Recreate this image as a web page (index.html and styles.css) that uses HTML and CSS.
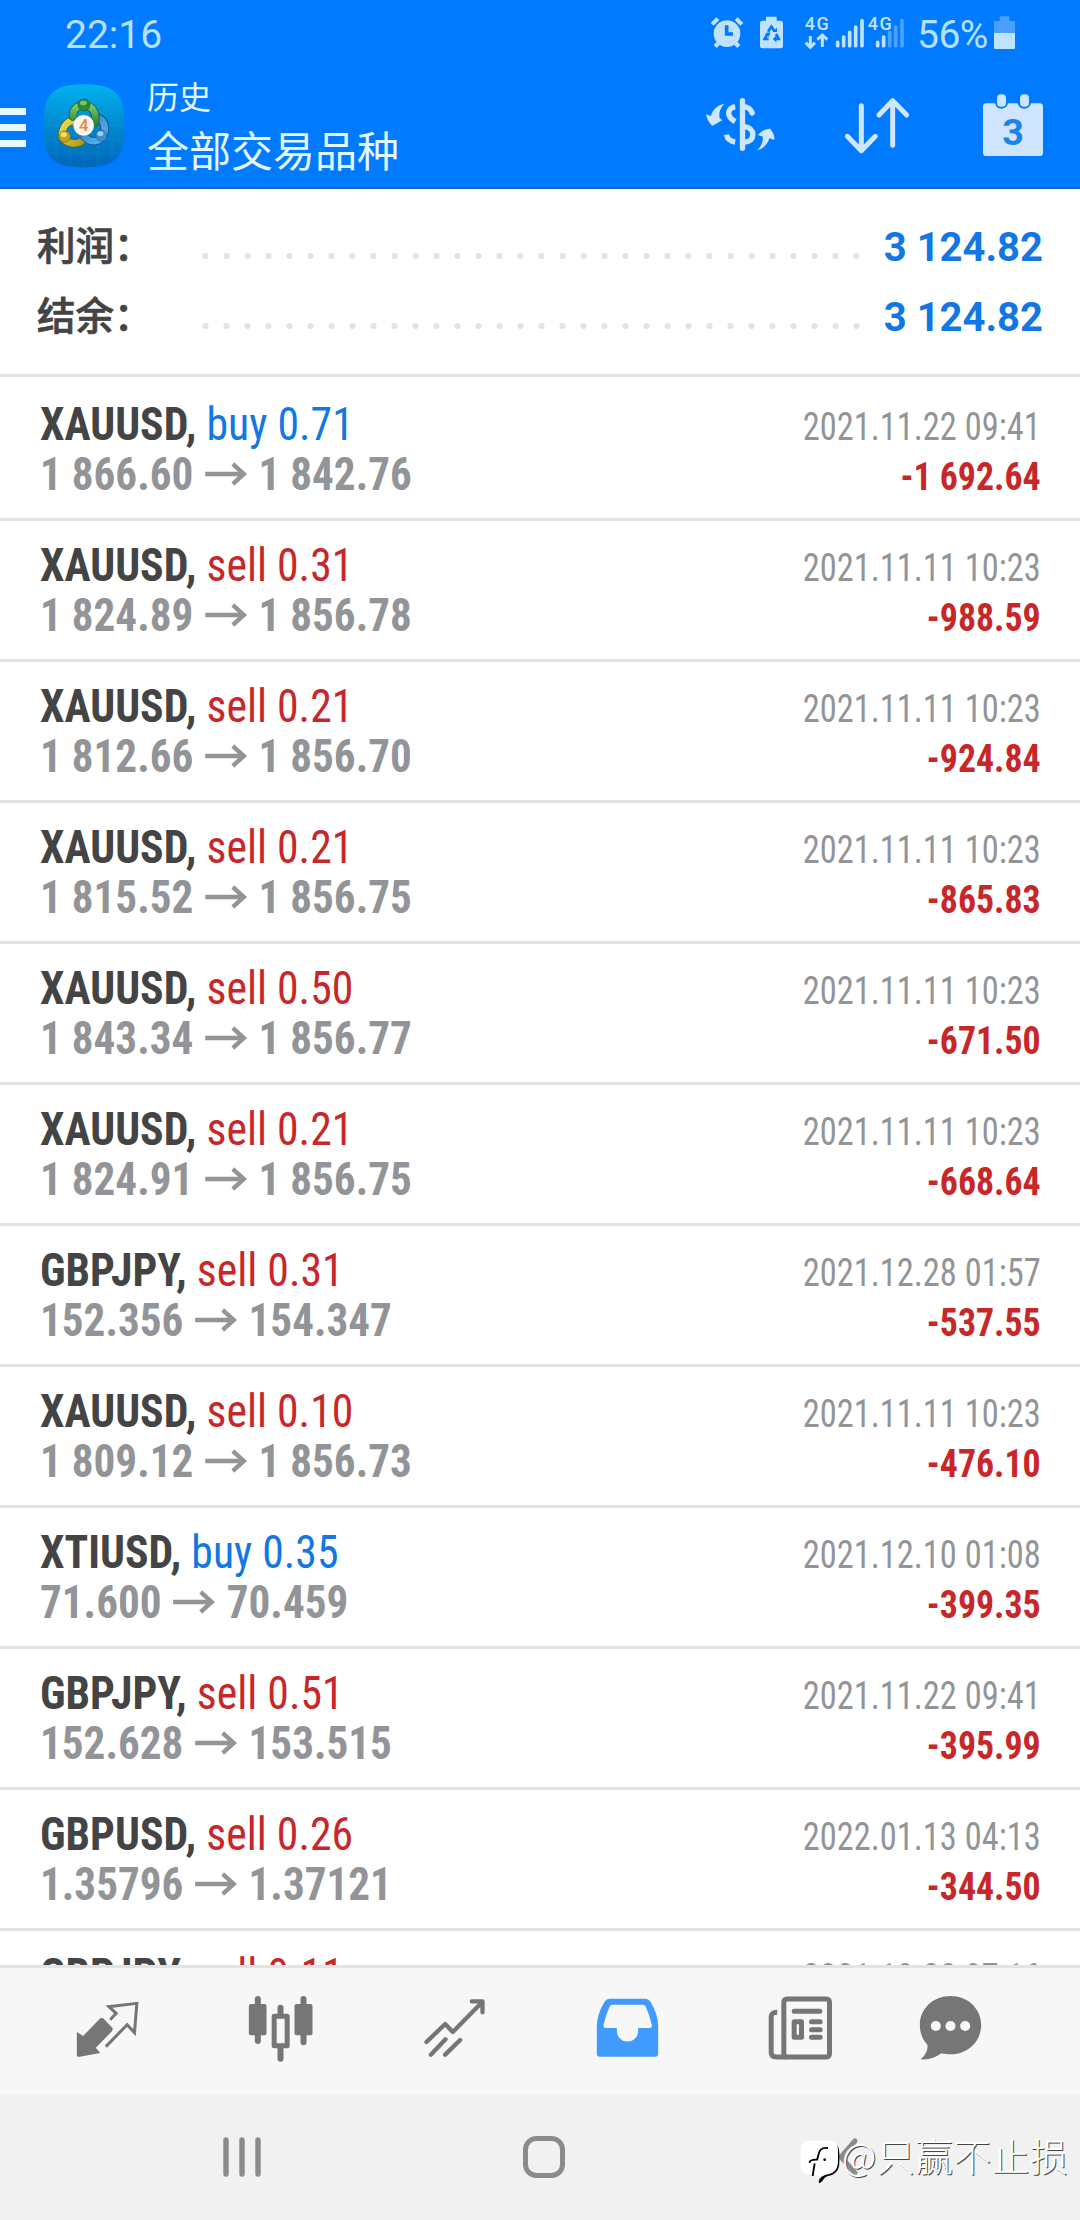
FILE: index.html
```html
<!DOCTYPE html>
<html lang="zh-CN">
<head>
<meta charset="utf-8">
<title>历史</title>
<link rel="stylesheet" href="styles.css">
</head>
<body>
<header class="top">
  <div class="status">
    <span class="clock">22:16</span>
    <svg class="s-alarm" viewBox="30 48 102 99">
      <g fill="#bfe2ff"><circle cx="81" cy="101" r="40"/>
      <path d="M32 69l17-17 9 8-17 17zM130 69l-17-17-9 8 17 17zM50 125l10 9-10 10-9-9zM112 125l-10 9 10 10 9-9z"/></g>
      <path d="M80 76v26h19" fill="none" stroke="#007aff" stroke-width="11"/>
    </svg>
    <svg class="s-saver" viewBox="180 48 69 99">
      <path fill="#bfe2ff" d="M198 50h32v12h12q7 0 7 7v69q0 7-7 7h-55q-7 0-7-7V69q0-7 7-7h11z"/>
      <g fill="none" stroke="#007aff" stroke-width="8"><path d="M204 95l10-15 10 14M206 117h-12l8-15M222 117h14l-8-15"/></g>
      <path fill="#007aff" d="M218 96h13V83zM196 99l15-2-4 13zM218 117l11-10v20z"/>
    </svg>
    <svg class="s-net1" viewBox="312 48 183 99">
      <text x="314" y="91" class="g4" textLength="72">4G</text>
      <g fill="none" stroke="#bfe2ff" stroke-width="9"><path d="M331 108v32M317 128l14 14 14-14M367 141v-32M352 119l15-14 15 14"/></g>
      <path d="M413 127v10M431 111v26M449 97v40M467 81v56M486 62v75" stroke="#bfe2ff" stroke-width="11" stroke-linecap="round"/>
    </svg>
    <svg class="s-net2" viewBox="501 48 114 99">
      <path d="M569 97v40M587 81v56M606 62v75" stroke="#4aa4ff" stroke-width="11" stroke-linecap="round"/>
      <path d="M533 127v10M551 111v26" stroke="#bfe2ff" stroke-width="11" stroke-linecap="round"/>
      <text x="503" y="91" class="g4" textLength="72">4G</text>
    </svg>
    <span class="pct">56%</span>
    <svg class="s-batt" viewBox="882 48 63 99">
      <path fill="#4aa0ff" d="M899 49h29v14h17v36h-63V63h17z"/>
      <path fill="#bfe2ff" d="M882 99h63v44q0 4-4 4h-55q-4 0-4-4z"/>
    </svg>
  </div>
  <div class="bar">
    <div class="burger"><i></i><i></i><i></i></div>
    <svg class="logo" viewBox="126 42 252 252">
      <defs>
        <linearGradient id="bg" x1="0" y1="0" x2="0" y2="1"><stop offset="0" stop-color="#00b2ee"/><stop offset=".5" stop-color="#0089d0"/><stop offset="1" stop-color="#0066b8"/></linearGradient>
        <linearGradient id="gr" x1="0" y1="0" x2="0" y2="1"><stop offset="0" stop-color="#7fca6a"/><stop offset="1" stop-color="#2a8a3a"/></linearGradient>
        <linearGradient id="ye" x1="0" y1="0" x2="1" y2="1"><stop offset="0" stop-color="#e9e05a"/><stop offset="1" stop-color="#b79a1c"/></linearGradient>
        <linearGradient id="bl" x1="0" y1="0" x2="1" y2="1"><stop offset="0" stop-color="#2b7fc4"/><stop offset="1" stop-color="#5bb4ee"/></linearGradient>
      </defs>
      <path fill="url(#bg)" d="M252 43c95 0 122 30 122 125s-27 124-122 124-122-29-122-124S157 43 252 43z"/>
      <path d="M168 62v210M210 48v240M252 44v246M294 48v240M336 62v210M146 82h212M132 124h240M132 166h240M132 208h240M146 250h212" stroke="#2aa5e4" stroke-width="2" opacity=".35"/>
      <g fill="none" stroke-linecap="round" stroke-linejoin="round">
        <path d="M222 152c-22 2-36 20-36 48 12 20 42 26 58 14" stroke="#4c6a1e" stroke-width="25"/>
        <path d="M222 152c-22 2-36 20-36 48 12 20 42 26 58 14" stroke="url(#ye)" stroke-width="20"/>
        <path d="M290 142c20 6 28 22 22 50-12 24-38 30-60 8" stroke="#15507f" stroke-width="25"/>
        <path d="M290 142c20 6 28 22 22 50-12 24-38 30-60 8" stroke="url(#bl)" stroke-width="20"/>
        <path d="M219 140c-2-18 10-34 32-34 26 0 40 22 34 52" stroke="#1c5c32" stroke-width="25"/>
        <path d="M219 140c-2-18 10-34 32-34 26 0 40 22 34 52" stroke="url(#gr)" stroke-width="20"/>
      </g>
      <circle cx="252" cy="105" r="18" fill="#2c8a35" stroke="#1b5c2c" stroke-width="2"/><ellipse cx="250" cy="99" rx="10" ry="7" fill="#7cc46c"/>
      <circle cx="194" cy="200" r="17" fill="#c5a41d" stroke="#7a6a18" stroke-width="2"/><ellipse cx="191" cy="194" rx="9" ry="7" fill="#f0e27a"/>
      <circle cx="304" cy="197" r="17" fill="#3c8fd2" stroke="#1b5c96" stroke-width="2"/><ellipse cx="301" cy="191" rx="9" ry="7" fill="#96d2f6"/>
      <circle cx="251" cy="166" r="31" fill="#fbf6f0"/>
      <text x="251" y="184" class="logo-num">4</text>
    </svg>
    <div class="titles"><div class="t1">历史</div><div class="t2">全部交易品种</div></div>
    <svg class="i-cur" viewBox="18 282 206 186">
      <g fill="none" stroke="#cfe6ff" stroke-width="16">
        <path d="M127 302v143" stroke-linecap="round"/>
        <path d="M105 320c-18 4-22 16-18 27 3 8 9 13 18 18M79 404c2 12 12 20 26 22"/>
        <path d="M130 320c14 1 22 8 26 19M130 379c22 3 28 12 28 25s-10 21-28 23" stroke-linecap="round"/>
      </g>
      <path fill="#cfe6ff" d="M73 311c-14 14-17 28-15 42l8 8-30 17c-8-10-16-18-18-35l14 5c6-20 20-33 41-37zM170 452c14-14 19-26 18-42l-15-5c8-10 20-18 37-19 9 11 13 20 13 34l-15-5c-6 18-18 31-38 37z"/>
    </svg>
    <svg class="i-sort" viewBox="432 282 192 186">
      <path d="M481 317v134M439 409l42 43 42-43M575 436V302M534 345l41-43 42 43" fill="none" stroke="#cfe6ff" stroke-width="15" stroke-linecap="round" stroke-linejoin="round"/>
    </svg>
    <svg class="i-cal" viewBox="966 282 180 186">
      <path fill="#cfe4ff" d="M976 310h26c2 9 8 16 19 16s18-7 20-16h29c2 9 9 16 20 16s18-7 20-16h26q10 0 10 10v138q0 10-10 10H976q-10 0-10-10V320q0-10 10-10z"/>
      <rect x="1008" y="283" width="27" height="37" rx="12" fill="#cfe4ff"/><rect x="1077" y="283" width="27" height="37" rx="12" fill="#cfe4ff"/>
      <text x="1056" y="434" class="cal-num">3</text>
    </svg>
  </div>
</header>
<section class="summary">
  <div class="sum"><span class="lab">利润：</span><span class="dots"></span><span class="val">3 124.82</span></div>
  <div class="sum"><span class="lab">结余：</span><span class="dots"></span><span class="val">3 124.82</span></div>
</section>
<main class="list" id="list"></main>
<nav class="tabs">
  <svg viewBox="213 285 200 204">
    <path fill="#767676" d="M221 396l19 12 52-54 8 1 29 30-2 8-49 50 13 16-65 12-5-3z"/>
    <path d="M321 359l18-19-22-20 84-10-7 88-22-24-64 66" fill="none" stroke="#767676" stroke-width="9"/>
  </svg>
  <svg viewBox="713 285 200 204">
    <path d="M745 297v126M882 297v130M813 323v25M813 440v36" stroke="#767676" stroke-width="18" stroke-linecap="round"/>
    <rect x="718" y="312" width="53" height="94" rx="6" fill="#767676"/><rect x="855" y="312" width="54" height="94" rx="6" fill="#767676"/>
    <rect x="794" y="349" width="39" height="88" fill="#f7f7f7" stroke="#767676" stroke-width="15" stroke-linejoin="round"/>
  </svg>
  <svg viewBox="1216 285 200 204">
    <path d="M1232 426l56-54 23 24 86-88M1368 304h32v33M1245 464l44-46M1288 464l45-44" fill="none" stroke="#767676" stroke-width="13" stroke-linecap="round" stroke-linejoin="round"/>
  </svg>
  <svg viewBox="153 285 200 204">
    <path fill="#419bff" fill-rule="evenodd" d="M199 296h108q9 0 14 8 24 39 24 75v82q0 9-9 9H170q-9 0-9-9v-82q0-36 24-75 5-8 14-8zM208 314q-6 0-9 6-11 24-18 55-1 9 6 9h34v9c2 42 62 42 64 0v-9h35q7 0 6-9-7-31-18-55-3-6-9-6z"/>
  </svg>
  <svg viewBox="660 285 200 204">
    <rect x="710" y="297" width="137" height="174" rx="9" fill="none" stroke="#767676" stroke-width="15"/>
    <path d="M690 337q-18-1-18 15v104q0 15 16 15h30" fill="none" stroke="#767676" stroke-width="15"/>
    <path d="M741 334h77M793 365h26M793 389h26M793 412h26" stroke="#767676" stroke-width="15" stroke-linecap="round"/>
    <rect x="741" y="365" width="22" height="47" fill="none" stroke="#767676" stroke-width="15" stroke-linejoin="round"/>
  </svg>
  <svg viewBox="1093 285 200 204">
    <path fill="#767676" d="M1193 288c52 0 92 38 92 87s-40 88-92 88c-10 0-18-1-27-3-18 13-38 20-63 18 14-12 22-25 21-43-15-16-23-36-23-60 0-49 40-87 92-87z"/>
    <g fill="#f7f7f7"><circle cx="1149" cy="378" r="15"/><circle cx="1193" cy="378" r="15"/><circle cx="1237" cy="378" r="15"/></g>
  </svg>
</nav>
<footer class="sys">
  <svg class="recents" viewBox="0 0 38 40"><path d="M3 3v34M19 3v34M35 3v34" stroke="#8b8b8b" stroke-width="5.4" stroke-linecap="round"/></svg>
  <svg class="home" viewBox="0 0 42 42"><rect x="2.5" y="2.5" width="37" height="37" rx="11" fill="none" stroke="#8b8b8b" stroke-width="5"/></svg>
  <svg class="back" viewBox="0 0 22 38"><path d="M18 3L4 19l14 16" fill="none" stroke="#8b8b8b" stroke-width="5" stroke-linecap="round"/></svg>
  <div class="mark">
    <svg viewBox="60 90 120 132">
      <path fill="#000" d="M150 98c22 0 28 12 28 34v26c0 26-16 36-34 40-8 3-12 7-16 14l-9 8-3-4 4-14z"/>
      <path fill="#fff" d="M84 93h66c18 0 24 10 24 28v32c0 26-12 36-30 40-12 3-20 6-24 13l-2-9c-6-2-14-3-30-4-16 0-26-10-26-26v-46c0-18 8-28 22-28z"/>
      <path d="M144 114c-20-2-26 6-29 22l-4 14M88 158c2-8 8-9 20-9h6M104 160l-6 38" fill="none" stroke="#000" stroke-width="5.5"/><circle cx="134" cy="149" r="4"/>
    </svg>
    <span>@只赢不止损</span>
  </div>
</footer>
<script src="rows.js"></script>
</body>
</html>
```
FILE: rows.js
```js
const deals = [
  ["XAUUSD", "buy", "0.71", "1 866.60", "1 842.76", "2021.11.22 09:41", "-1 692.64"],
  ["XAUUSD", "sell", "0.31", "1 824.89", "1 856.78", "2021.11.11 10:23", "-988.59"],
  ["XAUUSD", "sell", "0.21", "1 812.66", "1 856.70", "2021.11.11 10:23", "-924.84"],
  ["XAUUSD", "sell", "0.21", "1 815.52", "1 856.75", "2021.11.11 10:23", "-865.83"],
  ["XAUUSD", "sell", "0.50", "1 843.34", "1 856.77", "2021.11.11 10:23", "-671.50"],
  ["XAUUSD", "sell", "0.21", "1 824.91", "1 856.75", "2021.11.11 10:23", "-668.64"],
  ["GBPJPY", "sell", "0.31", "152.356", "154.347", "2021.12.28 01:57", "-537.55"],
  ["XAUUSD", "sell", "0.10", "1 809.12", "1 856.73", "2021.11.11 10:23", "-476.10"],
  ["XTIUSD", "buy", "0.35", "71.600", "70.459", "2021.12.10 01:08", "-399.35"],
  ["GBPJPY", "sell", "0.51", "152.628", "153.515", "2021.11.22 09:41", "-395.99"],
  ["GBPUSD", "sell", "0.26", "1.35796", "1.37121", "2022.01.13 04:13", "-344.50"],
  ["GBPJPY", "sell", "0.11", "", "", "2021.12.28 07:16", ""]
];
const arrow = '<svg class="arrow" viewBox="0 0 46 22"><path d="M0 11h43M30 1l12 10-12 10" fill="none" stroke="#929497" stroke-width="4.6"/></svg>';
document.getElementById("list").innerHTML = deals.map(d => `
<article class="row">
  <div class="left">
    <div class="sym"><b>${d[0]},</b> <span class="${d[1]}">${d[1]} ${d[2]}</span></div>
    ${d[3] ? `<div class="price">${d[3]}${arrow}${d[4]}</div>` : ""}
  </div>
  <div class="right"><div class="date">${d[5]}</div><div class="amount">${d[6]}</div></div>
</article>`).join("");
```
FILE: styles.css
```css
* { box-sizing: border-box; }
body { margin: 0; width: 1080px; height: 2220px; overflow: hidden; display: flex; flex-direction: column; background: #fff; font-family: Roboto, "Noto Sans CJK SC", sans-serif; }
svg { display: block; flex: none; overflow: visible; }

.top { height: 189px; flex: none; background: #007aff; border-bottom: 2px solid #1b68b8; }
.status { height: 66px; display: flex; align-items: flex-start; padding: 16px 65px 0 65px; color: #b5e0ff; font-size: 39px; line-height: 39px; white-space: nowrap; }
.status svg { height: 33px; }
.clock { width: 645px; }
.s-alarm { width: 34px; margin-right: 16px; }
.s-saver { width: 23px; margin-right: 21px; }
.s-net1 { width: 61px; margin-right: 2px; }
.s-net2 { width: 38px; }
.pct { width: 77px; margin-left: 12px; letter-spacing: -.5px; }
.s-batt { width: 21px; }
.g4 { font: 500 54px Roboto; fill: #bfe2ff; }

.bar { height: 121px; display: flex; align-items: flex-start; }
.burger { width: 26px; margin: 42px 16px 0 0; display: grid; gap: 9px; }
.burger i { height: 7px; background: #e6fbff; }
.logo { width: 84px; height: 84px; margin-top: 18px; }
.logo-num { font: 500 50px Roboto; fill: #e8853a; text-anchor: middle; }
.titles { width: 559px; margin-left: 21px; color: #e3f8ff; white-space: nowrap; font-family: "Noto Sans CJK SC", sans-serif; }
.t1 { font-size: 32px; line-height: 40px; margin-top: 9px; }
.t2 { font-size: 42px; line-height: 60px; margin-top: 4px; }
.bar > svg:not(.logo) { height: 62px; margin-top: 28px; }
.i-cur { width: 69px; }
.i-sort { width: 64px; margin-left: 70px; }
.i-cal { width: 60px; margin-left: 74px; }
.cal-num { font: 700 113px Roboto; fill: #1b82ee; text-anchor: middle; }

.summary { height: 188px; flex: none; padding: 22px 37px 0; border-bottom: 3px solid #e3e3e3; }
.sum { height: 70px; display: flex; align-items: center; line-height: 70px; }
.lab { width: 158px; padding-bottom: 5px; font: 500 38.5px/65px "Noto Sans CJK SC", sans-serif; color: #444; white-space: nowrap; -webkit-text-stroke: .7px #444; }
.dots { width: 672px; height: 6px; margin-top: 19px; background: radial-gradient(circle at 10.5px 3px, #e3e3e3 2.8px, transparent 3.4px) 0 0 / 21px 6px; }
.val { flex: 1; padding-top: 4px; text-align: right; font-size: 40px; line-height: 66px; font-weight: 700; color: #1277e3; white-space: nowrap; }

.list { height: 1588px; flex: none; overflow: hidden; padding-top: 3px; font-family: Roboto, sans-serif; font-stretch: 75%; }
.row { height: 141px; padding: 19px 39px 0 40px; display: flex; justify-content: space-between; border-bottom: 3px solid #e3e3e3; white-space: nowrap; line-height: 50px; }
.sym { font-size: 47px; transform: scaleX(.93); transform-origin: left; color: #444; }
.buy { color: #1277e3; }
.sell { color: #c8272a; }
.price { display: flex; align-items: center; font-size: 47px; font-weight: 700; color: #929497; transform: scaleX(.918); transform-origin: left; }
.arrow { width: 46px; height: 22px; margin: 0 12px 0 13px; }
.right { padding-top: 3px; text-align: right; font-size: 39px; }
.date { color: #929497; transform: scaleX(.882); transform-origin: right; }
.amount { font-weight: 700; color: #c8272a; transform: scaleX(.918); transform-origin: right; }

.tabs { height: 129px; flex: none; background: #f7f7f7; border-top: 3px solid #e3e3e3; display: grid; grid-template-columns: repeat(5, 173.3px) 127px; padding: 27px 0 0 21px; justify-items: center; }
.tabs svg { width: 69px; height: 68px; }

.sys { position: relative; height: 126px; flex: none; background: #f1f1f1; display: flex; align-items: center; padding-left: 223px; }
.recents { width: 38px; height: 40px; }
.home { width: 42px; height: 42px; margin-left: 262px; }
.back { width: 22px; height: 38px; margin-left: 272px; }
.mark { position: absolute; left: 800px; top: 36px; height: 60px; display: flex; align-items: flex-start; white-space: nowrap; }
.mark svg { width: 40px; height: 44px; margin-top: 10px; }
.mark span { margin: -3px 0 0 2px; font: 300 37.7px/56px "Noto Sans CJK SC", sans-serif; letter-spacing: .6px; color: #fff; text-shadow: 1px 1px 0 #444; -webkit-text-stroke: .6px #fff; paint-order: stroke; }
```
